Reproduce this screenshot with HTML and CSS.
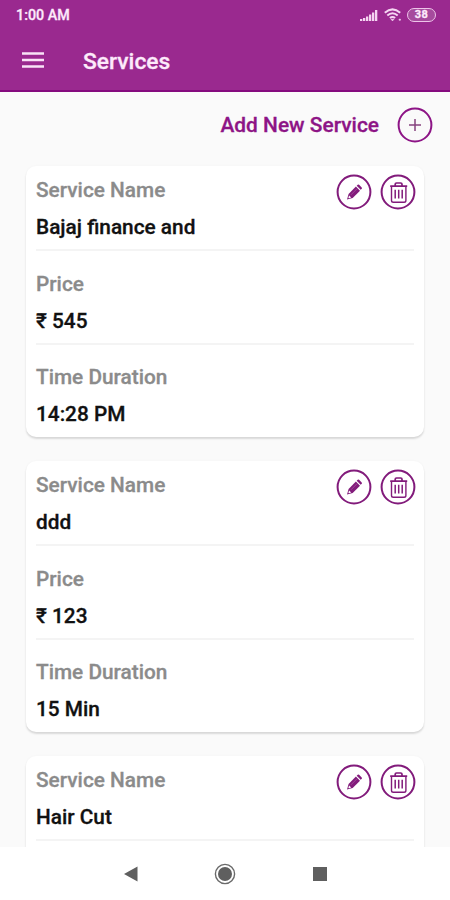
FILE: index.html
```
<!DOCTYPE html>
<html lang="en">
<head>
<meta charset="utf-8">
<title>Services</title>
<link rel="stylesheet" href="styles.css">
</head>
<body>
<svg class="defs" aria-hidden="true">
  <symbol id="edit" viewBox="0 0 36 36">
    <circle cx="18" cy="18" r="16.4" fill="none" stroke="currentColor" stroke-width="2"/>
    <path d="M11 25.6l1.6-5.7 7.3-7.3 4.1 4.1-7.3 7.3z" fill="currentColor"/>
    <path d="M20.7 11.8l1-1q.7-.7 1.4 0l2.6 2.6q.7.7 0 1.4l-1 1z" fill="currentColor"/>
    <path d="M13.1 21.4l2.1 2.1-2.3.7-.5-.5z" fill="#fff"/>
    <path d="M15 20.8l6-6" stroke="#b060aa" stroke-width=".6"/>
  </symbol>
  <symbol id="trash" viewBox="0 0 36 36">
    <g fill="none" stroke="currentColor">
      <circle cx="18" cy="18" r="16.4" stroke-width="2"/>
      <path d="M10.2 12.2h17M15.2 11.5v-1.2q0-1.3 1.3-1.3h4.2q1.3 0 1.3 1.3v1.2" stroke-width="1.7"/>
      <path d="M11.5 12.5v14q0 1.8 1.8 1.8h10.8q1.8 0 1.8-1.8v-14" stroke-width="1.4"/>
      <path d="M15.2 15.7v8.9M18.7 15.7v8.9M22.2 15.7v8.9" stroke-width="1.5"/>
    </g>
  </symbol>
</svg>
<div class="screen">
  <header class="header">
    <div class="status">
      <span>1:00 AM</span>
      <div class="status-icons">
        <svg width="18" height="13" viewBox="0 0 18 13" fill="#f5d5f2"><path d="M0 10h2.3v2H0zM3 9h2.3v3H3zM6 7.5h2.3V12H6zM9 5.5h2.3V12H9zM12 3.5h2.3V12H12zM15 1h2.3v11H15z"/></svg>
        <svg class="wifi" width="18" height="14" viewBox="0 0 18 14" fill="none" stroke="#f5d5f2" stroke-width="2"><path d="M.8 4.8q7.7-6.8 15.4 0M3.3 7.6q5.2-4.6 10.4 0M5.9 10.1q2.6-2.3 5.2 0"/><path d="M7 11.3h3l-1.5 1.6zM15 11.2h1.5v1H15z" fill="#f5d5f2" stroke-width=".6"/></svg>
        <span class="battery">38</span>
      </div>
    </div>
    <div class="toolbar">
      <svg width="22" height="18" viewBox="0 0 22 18"><path d="M0 2.5h22M0 9h22M0 15.5h22" stroke="#f9e3f7" stroke-width="2.6"/></svg>
      <h1>Services</h1>
    </div>
  </header>
  <main class="content">
    <div class="add">
      <span>Add New Service</span>
      <svg width="36" height="36" viewBox="0 0 36 36" fill="none" stroke="currentColor"><circle cx="18" cy="18" r="16.4" stroke-width="2"/><path d="M12 18h12M18 12v12" stroke-width="1.5" stroke="#86437f"/></svg>
    </div>
    <section class="card">
      <div class="actions"><svg><use href="#edit"/></svg><svg><use href="#trash"/></svg></div>
      <div class="field"><span class="label">Service Name</span><span class="value">Bajaj finance and</span></div>
      <div class="field"><span class="label">Price</span><span class="value">₹ 545</span></div>
      <div class="field"><span class="label">Time Duration</span><span class="value">14:28 PM</span></div>
    </section>
    <section class="card">
      <div class="actions"><svg><use href="#edit"/></svg><svg><use href="#trash"/></svg></div>
      <div class="field"><span class="label">Service Name</span><span class="value">ddd</span></div>
      <div class="field"><span class="label">Price</span><span class="value">₹ 123</span></div>
      <div class="field"><span class="label">Time Duration</span><span class="value">15 Min</span></div>
    </section>
    <section class="card">
      <div class="actions"><svg><use href="#edit"/></svg><svg><use href="#trash"/></svg></div>
      <div class="field"><span class="label">Service Name</span><span class="value">Hair Cut</span></div>
    </section>
  </main>
  <nav class="nav">
    <svg width="14" height="16" viewBox="0 0 14 16"><path d="M0 8L13.5.5v15z" fill="#5f5f5f"/></svg>
    <svg width="22" height="22" viewBox="0 0 22 22"><circle cx="11" cy="11" r="9.6" fill="none" stroke="#6a6a6a" stroke-width="1.4"/><circle cx="11" cy="11" r="7" fill="#5f5f5f"/></svg>
    <svg width="14" height="14" viewBox="0 0 14 14"><path d="M0 0h14v14H0z" fill="#5f5f5f"/></svg>
  </nav>
</div>
</body>
</html>
```
FILE: styles.css
```
* { box-sizing: border-box; }
body { margin: 0; font-family: Roboto, "Noto Sans", sans-serif; font-weight: 500; -webkit-text-stroke: .3px; }
svg { display: block; flex: none; }
.defs { display: none; }
.screen {
  width: 450px;
  height: 900px;
  display: flex;
  flex-direction: column;
  overflow: hidden;
  background: #fafafa;
}
.header {
  height: 92px;
  flex: none;
  background: #9a298f;
  border-bottom: 2px solid #850b7e;
  color: #fdeafb;
}
.status {
  height: 30px;
  display: flex;
  justify-content: space-between;
  align-items: center;
  padding: 0 14px 0 16px;
  font-size: 14.3px;
}
.status-icons { display: flex; align-items: center; gap: 5.5px; }
.battery {
  width: 29px;
  height: 14px;
  border: 1.5px solid #edc4e9;
  border-radius: 7px;
  background: #a64a9d;
  font-size: 11px;
  line-height: 12px;
  font-weight: 700;
  letter-spacing: .5px;
  text-align: center;
}
.toolbar { height: 60px; display: flex; align-items: center; gap: 39px; padding: 2px 22px 0; }
.toolbar svg { margin-top: -2px; }
.toolbar h1 { margin: 0; font-size: 22.8px; font-weight: 500; }
.content { flex: 1; min-height: 0; overflow: hidden; padding: 15px 26px 0; }
.add {
  height: 36px;
  margin: 0 -9px 23px 0;
  display: flex;
  justify-content: flex-end;
  align-items: center;
  gap: 18px;
  color: #8d1486;
  font-size: 20.9px;
}
.card {
  position: relative;
  height: 271px;
  margin-bottom: 24px;
  padding: 12px 10px 0;
  border-radius: 10px;
  background: #fff;
  box-shadow: 0 2px 2px rgba(0, 0, 0, .13), 0 0 3px rgba(0, 0, 0, .03);
}
.actions { position: absolute; top: 8px; right: 8px; display: flex; gap: 8px; color: #821b7b; }
.actions svg { width: 36px; height: 36px; }
.field {
  height: 73px;
  margin-bottom: 20.7px;
  display: flex;
  flex-direction: column;
  gap: 13px;
  border-bottom: 2px solid #f4f4f4;
  font-size: 20.8px;
  line-height: 24px;
}
.field:nth-child(4) { border: 0; }
.label { color: #8b8b8b; }
.value { color: #111; }
.nav {
  height: 53px;
  flex: none;
  display: flex;
  justify-content: center;
  align-items: center;
  gap: 76.5px;
  background: #fff;
}
```
